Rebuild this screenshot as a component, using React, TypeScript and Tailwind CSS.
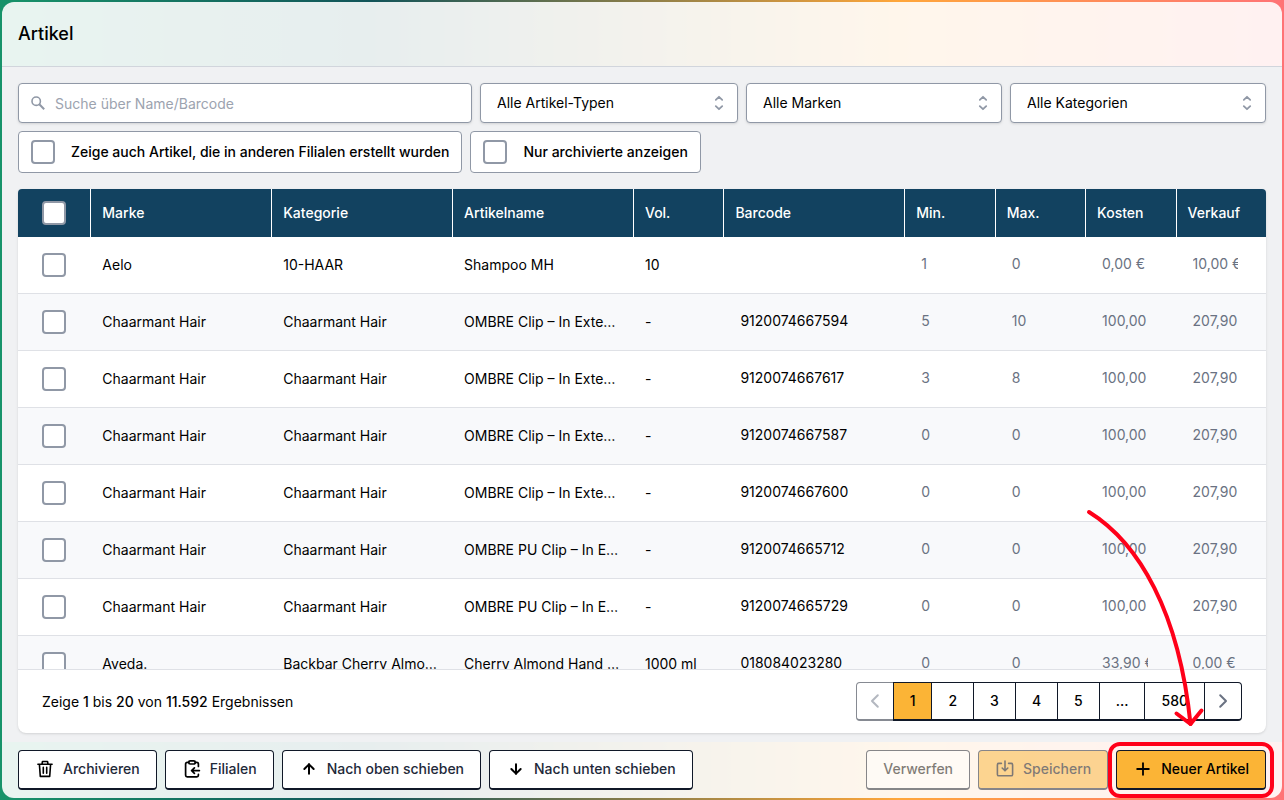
import type { ReactNode } from 'react';
import { ArrowDown, ArrowUp, Plus } from 'lucide-react';

type Artikel = {
  marke: string;
  kategorie: string;
  name: string;
  vol: string;
  barcode: string;
  min: string;
  max: string;
  kosten: string;
  verkauf: string;
};

const ombre = { marke: 'Chaarmant Hair', kategorie: 'Chaarmant Hair', vol: '-', kosten: '100,00 €', verkauf: '207,90 €' };

const artikel: Artikel[] = [
  { marke: 'Aelo', kategorie: '10-HAAR', name: 'Shampoo MH', vol: '10', barcode: '', min: '1', max: '0', kosten: '0,00 €', verkauf: '10,00 €' },
  { ...ombre, name: 'OMBRE Clip – In Extensions', barcode: '9120074667594', min: '5', max: '10' },
  { ...ombre, name: 'OMBRE Clip – In Extensions', barcode: '9120074667617', min: '3', max: '8' },
  { ...ombre, name: 'OMBRE Clip – In Extensions', barcode: '9120074667587', min: '0', max: '0' },
  { ...ombre, name: 'OMBRE Clip – In Extensions', barcode: '9120074667600', min: '0', max: '0' },
  { ...ombre, name: 'OMBRE PU Clip – In Ext.', barcode: '9120074665712', min: '0', max: '0' },
  { ...ombre, name: 'OMBRE PU Clip – In Ext.', barcode: '9120074665729', min: '0', max: '0' },
  { marke: 'Aveda.', kategorie: 'Backbar Cherry Almond', name: 'Cherry Almond Hand Wash', vol: '1000 ml', barcode: '018084023280', min: '0', max: '0', kosten: '33,90 €', verkauf: '0,00 €' },
];

const columns = [
  { label: 'Marke', width: 'w-[14.5%]' },
  { label: 'Kategorie', width: 'w-[14.5%]' },
  { label: 'Artikelname', width: 'w-[14.5%]' },
  { label: 'Vol.', width: 'w-[7.25%]' },
  { label: 'Barcode', width: 'w-[14.5%]' },
  { label: 'Min.', width: 'w-[7.25%]' },
  { label: 'Max.', width: 'w-[7.25%]' },
  { label: 'Kosten', width: 'w-[7.25%]' },
  { label: 'Verkauf', width: 'w-[7.25%]' },
];

function Checkbox({ label }: { label?: string }) {
  return (
    <input
      type="checkbox"
      aria-label={label}
      className="block size-6 shrink-0 appearance-none rounded border-2 border-[#9098a6] bg-white checked:bg-[#124260]"
    />
  );
}

function FilterCheckbox({ label }: { label: string }) {
  return (
    <label className="flex items-center gap-4 rounded border border-[#9098a6] bg-white px-3 py-2 font-medium">
      <Checkbox />
      {label}
    </label>
  );
}

function FilterSelect({ label }: { label: string }) {
  return (
    <div className="relative">
      <select
        aria-label={label}
        className="h-10 w-full appearance-none rounded border border-[#9098a6] bg-white pl-4 pr-10 shadow-sm"
      >
        <option>{label}</option>
      </select>
      <svg
        viewBox="0 0 20 20"
        className="pointer-events-none absolute right-[9px] top-[10px] size-5 fill-none stroke-[#9098a6]"
        strokeWidth="1.8"
        strokeLinecap="round"
        strokeLinejoin="round"
      >
        <path d="M6.8 6.8 10 3.8l3.2 3M6.8 13.2l3.2 3 3.2-3" />
      </svg>
    </div>
  );
}

function CellInput({ label, value, dark }: { label: string; value: string; dark?: boolean }) {
  return (
    <input
      type="text"
      aria-label={label}
      defaultValue={value}
      className={`block h-6 w-full bg-transparent pb-1 pl-[5px] pr-4 outline-none ${dark ? 'text-black' : 'text-gray-500'}`}
    />
  );
}

function ActionButton({ children }: { children: ReactNode }) {
  return (
    <button
      type="button"
      className="flex h-10 items-center gap-2 rounded border border-b-2 border-gray-900 bg-white px-4 pb-px font-medium text-gray-800"
    >
      {children}
    </button>
  );
}

function PageButton({ children, active }: { children: ReactNode; active?: boolean }) {
  return (
    <button
      type="button"
      className={`-ml-px border border-b-2 border-gray-900 px-4 py-2 font-medium ${active ? 'bg-[#fbb436]' : 'bg-white'}`}
    >
      {children}
    </button>
  );
}

function Chevron({ d }: { d: string }) {
  return (
    <svg viewBox="0 0 20 20" className="size-5 fill-none stroke-gray-500" strokeWidth="2" strokeLinecap="round" strokeLinejoin="round">
      <path d={d} />
    </svg>
  );
}

function TrashIcon() {
  return (
    <svg viewBox="0 0 20 20" className="size-5 fill-none stroke-black" strokeWidth="1.6" strokeLinejoin="round" strokeLinecap="round">
      <path d="M2.9 5.2h14.2M4.4 5.2l.9 12.2h9.4l.9-12.2M7 5l.5-2.5h5L13 5" />
      <path d="M8.3 8.4v5.8M11.7 8.4v5.8" />
    </svg>
  );
}

function ClipboardIcon() {
  return (
    <svg viewBox="0 0 20 20" className="size-5 fill-none stroke-black" strokeWidth="1.7" strokeLinejoin="round" strokeLinecap="round">
      <path d="M6.7 3.4H5.2c-.9 0-1.6.7-1.6 1.6v11.2c0 .9.7 1.6 1.6 1.6h9.6c.9 0 1.6-.7 1.6-1.6v-.8M13.3 3.4h1.5c.9 0 1.6.7 1.6 1.6v2.4" />
      <path d="M8.3 1.9h3.4c.9 0 1.6.6 1.6 1.5s-.7 1.6-1.6 1.6H8.3c-.9 0-1.6-.7-1.6-1.6s.7-1.5 1.6-1.5ZM17.4 11.6H9.6M12.4 8.8l-2.8 2.8 2.8 2.8" />
    </svg>
  );
}

function SaveIcon() {
  return (
    <svg viewBox="0 0 20 20" className="size-5 fill-none stroke-black" strokeWidth="1.6" strokeLinejoin="round" strokeLinecap="round">
      <path d="M6.4 4.4H3.8c-.8 0-1.4.6-1.4 1.4v9.6c0 .8.6 1.4 1.4 1.4h12.4c.8 0 1.4-.6 1.4-1.4V5.8c0-.8-.6-1.4-1.4-1.4h-2.6" />
      <path d="M10 2v9.6M7.2 9l2.8 2.8L12.8 9" />
    </svg>
  );
}

export default function App() {
  return (
    <div className="h-screen bg-[linear-gradient(to_right,#17936a,#125459_29%,#ffa63a_70%,#ff7376)] p-[2px] font-['Inter',sans-serif] text-sm text-black">
      <div className="flex h-full flex-col overflow-hidden rounded-xl bg-white/90">
        <header className="flex h-[65px] shrink-0 items-center border-b border-gray-300 px-4">
          <h1 className="text-lg font-medium">Artikel</h1>
        </header>

        <main className="flex min-h-0 flex-1 flex-col bg-[#f0f1f3] px-4 pb-[9px] pt-4">
          <div className="grid grid-cols-[454fr_258fr_256fr_256fr] gap-2">
            <div className="relative">
              <svg
                viewBox="0 0 20 20"
                className="absolute left-[10px] top-[10px] size-5 fill-none stroke-[#9098a6]"
                strokeWidth="1.6"
              >
                <circle cx="8.2" cy="8.2" r="4.2" />
                <path d="m11.3 11.3 4.9 4.9" strokeWidth="2" />
              </svg>
              <input
                type="search"
                aria-label="Suche"
                placeholder="Suche über Name/Barcode"
                className="h-10 w-full rounded border border-[#9098a6] bg-white pl-9 pr-3 shadow-sm placeholder:text-[#9ca3af]"
              />
            </div>
            <FilterSelect label="Alle Artikel-Typen" />
            <FilterSelect label="Alle Marken" />
            <FilterSelect label="Alle Kategorien" />
          </div>

          <div className="mt-2 flex gap-2">
            <FilterCheckbox label="Zeige auch Artikel, die in anderen Filialen erstellt wurden" />
            <FilterCheckbox label="Nur archivierte anzeigen" />
          </div>

          <section className="mt-4 flex min-h-0 flex-1 flex-col overflow-hidden rounded-b-lg rounded-t bg-white shadow">
            <div className="min-h-0 flex-1 overflow-hidden">
              <table className="w-full table-fixed border-separate border-spacing-0 text-left">
                <thead className="bg-[#124260] text-white">
                  <tr className="h-12">
                    <th className="w-[5.8%] pl-6">
                      <Checkbox label="Alle auswählen" />
                    </th>
                    {columns.map((c) => (
                      <th key={c.label} className={`${c.width} border-l border-white pl-[11px] font-medium`}>
                        {c.label}
                      </th>
                    ))}
                  </tr>
                </thead>
                <tbody>
                  {artikel.map((a, i) => (
                    <tr key={i} className="h-[57px] even:bg-[#f8f9fb] [&>td]:border-b [&>td]:border-[#dfe1e6]">
                      <td className="pl-6">
                        <Checkbox label={`${a.name} auswählen`} />
                      </td>
                      <td className="truncate px-3">{a.marke}</td>
                      <td className="truncate px-3">{a.kategorie}</td>
                      <td className="truncate px-3">{a.name}</td>
                      <td className="truncate px-3">{a.vol}</td>
                      <td className="px-3"><CellInput label="Barcode" value={a.barcode} dark /></td>
                      <td className="px-3"><CellInput label="Min." value={a.min} /></td>
                      <td className="px-3"><CellInput label="Max." value={a.max} /></td>
                      <td className="px-3"><CellInput label="Kosten" value={a.kosten} /></td>
                      <td className="px-3"><CellInput label="Verkauf" value={a.verkauf} /></td>
                    </tr>
                  ))}
                </tbody>
              </table>
            </div>

            <div className="flex shrink-0 items-center justify-between border-t border-[#dfe1e6] px-6 py-3">
              <p>
                Zeige <span className="font-medium">1</span> bis <span className="font-medium">20</span> von{' '}
                <span className="font-medium">11.592</span> Ergebnissen
              </p>
              <nav aria-label="Seiten" className="flex">
                <button
                  type="button"
                  disabled
                  aria-label="Zurück"
                  className="rounded-l border border-b-2 border-gray-900 px-2 opacity-50"
                >
                  <Chevron d="M12.8 4.2 7 10l5.8 5.8" />
                </button>
                <PageButton active>1</PageButton>
                <PageButton>2</PageButton>
                <PageButton>3</PageButton>
                <PageButton>4</PageButton>
                <PageButton>5</PageButton>
                <PageButton>...</PageButton>
                <PageButton>580</PageButton>
                <button
                  type="button"
                  aria-label="Weiter"
                  className="-ml-px rounded-r border border-b-2 border-gray-900 px-2"
                >
                  <Chevron d="M7.2 4.2 13 10l-5.8 5.8" />
                </button>
              </nav>
            </div>
          </section>
        </main>

        <footer className="flex shrink-0 justify-between px-4 py-2">
          <div className="flex gap-2">
            <ActionButton><TrashIcon />Archivieren</ActionButton>
            <ActionButton><ClipboardIcon />Filialen</ActionButton>
            <ActionButton><ArrowUp size={16} strokeWidth={3} className="mx-[2px] text-black" />Nach oben schieben</ActionButton>
            <ActionButton><ArrowDown size={16} strokeWidth={3} className="mx-[2px] text-black" />Nach unten schieben</ActionButton>
          </div>
          <div className="flex gap-2">
            <button
              type="button"
              disabled
              className="h-10 rounded border border-b-2 border-gray-900 bg-white px-4 pb-px font-medium opacity-50"
            >
              Verwerfen
            </button>
            <button
              type="button"
              disabled
              className="flex h-10 items-center gap-2 rounded border border-b-2 border-gray-900 bg-[#fbb436] px-4 pb-px font-medium opacity-50"
            >
              <SaveIcon />
              Speichern
            </button>
            <div className="relative">
              <button
                type="button"
                className="flex h-10 items-center gap-2 rounded border border-b-2 border-gray-900 bg-[#fbb436] px-4 pb-px font-medium"
              >
                <Plus size={20} strokeWidth={2.2} />
                Neuer Artikel
              </button>
              <div className="pointer-events-none absolute -inset-2 rounded-xl border-4 border-[#ff0019]" />
              <svg
                viewBox="0 0 120 222"
                className="pointer-events-none absolute bottom-15 right-15 h-[222px] w-[120px] fill-none stroke-[#ff0019]"
                strokeWidth="4"
                strokeLinecap="round"
                strokeLinejoin="round"
              >
                <path d="M3 4C53 35 93 104 104.5 216" />
                <path d="M90.5 205.5 104.5 216l11-13.5" />
              </svg>
            </div>
          </div>
        </footer>
      </div>
    </div>
  );
}
